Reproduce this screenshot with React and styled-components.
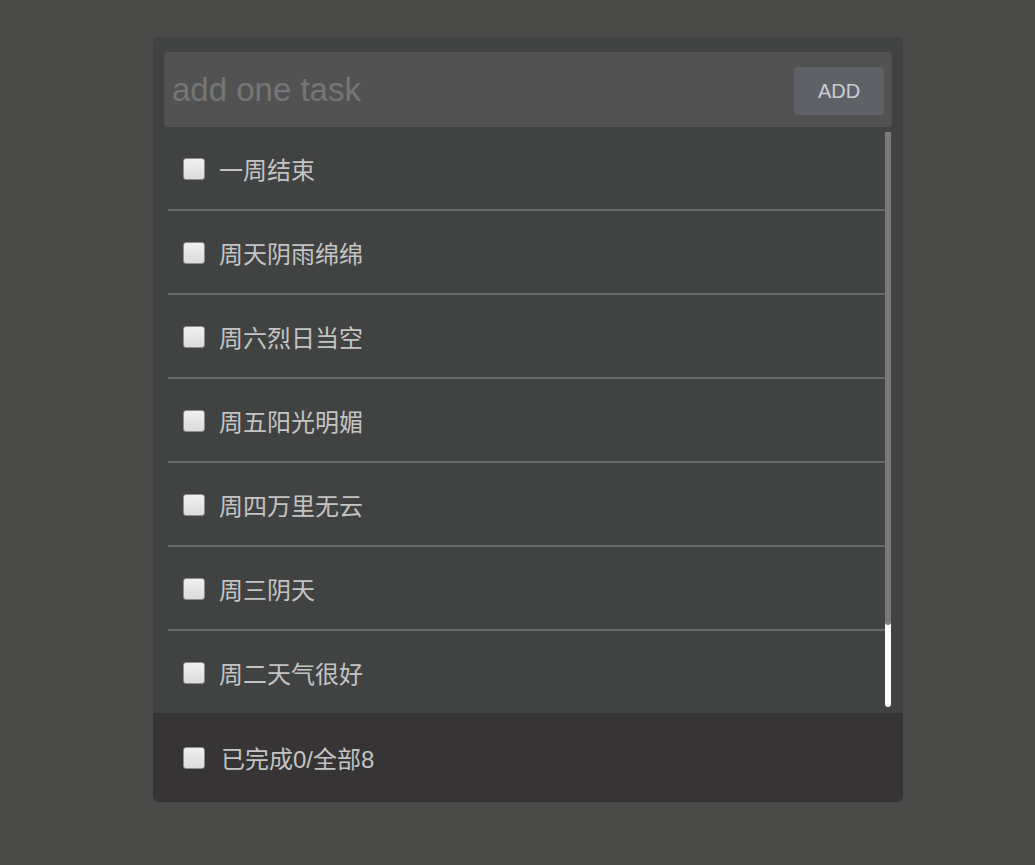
import { useState, useRef, useEffect } from "react";
import styled, { createGlobalStyle } from "styled-components";

const GlobalStyle = createGlobalStyle`
  html, body {
    margin: 0;
    padding: 0;
    background: #4a4a48;
    font-family: "Liberation Sans", "Noto Sans CJK SC", sans-serif;
  }
`;

const Page = styled.div`
  padding: 37px 0 0 153px;
  min-height: 865px;
  box-sizing: border-box;
`;

const Card = styled.div`
  width: 750px;
  background: #414242;
  border-radius: 6px;
  padding-top: 15px;
  display: flex;
  flex-direction: column;
  overflow: hidden;
`;

const InputBar = styled.div`
  margin: 0 11px;
  height: 75px;
  background: #525252;
  border-radius: 4px;
  display: flex;
  align-items: center;
  padding: 0 8px;
  gap: 10px;
`;

const TaskInput = styled.input`
  flex: 1;
  min-width: 0;
  background: transparent;
  border: none;
  outline: none;
  font-family: inherit;
  font-size: 33px;
  color: #ddd;
  padding: 0;

  &::placeholder {
    color: #767676;
  }
`;

const AddButton = styled.button`
  width: 90px;
  height: 48px;
  margin-top: 3px;
  border: none;
  border-radius: 4px;
  background: #5e6166;
  color: #c9ced5;
  font-family: inherit;
  font-size: 20px;
  cursor: pointer;
`;

const ListWrap = styled.div`
  position: relative;
  margin: 0 11px 0 15px;
`;

const List = styled.div`
  height: 586px;
  overflow-y: auto;
  padding-right: 7px;
  scrollbar-width: none;

  &::-webkit-scrollbar {
    display: none;
  }
`;

const Track = styled.div`
  position: absolute;
  right: 1px;
  top: 5px;
  bottom: 6px;
  width: 6px;
  background: #fafafa;
  border-radius: 3px;
`;

const Thumb = styled.div`
  position: absolute;
  left: 0;
  right: 0;
  background: #7b7878;
  border-radius: 3px;
`;

const Item = styled.label`
  display: flex;
  align-items: center;
  gap: 14px;
  height: 82px;
  padding-left: 15px;
  border-bottom: 2px solid #67686b;
  color: #c4c4c4;
  font-size: 24px;
  cursor: pointer;
`;

const Box = styled.input.attrs({ type: "checkbox" })`
  appearance: none;
  margin: 1px 0 0;
  width: 22px;
  height: 22px;
  box-sizing: border-box;
  border: 1px solid #8e8e8e;
  border-radius: 3px;
  background: linear-gradient(#f0f0f0, #dcdcdc);
  flex-shrink: 0;
  cursor: pointer;

  &:checked {
    background: #3b8fe0;
    border-color: #2a6fb5;
  }
`;

const Footer = styled.div`
  height: 89px;
  background: #363434;
  display: flex;
  align-items: center;
  gap: 16px;
  padding-left: 30px;
  color: #c4c4c4;
  font-size: 24px;
`;

const Label = styled.span`
  white-space: nowrap;
`;

const initialTasks = [
  "一周结束",
  "周天阴雨绵绵",
  "周六烈日当空",
  "周五阳光明媚",
  "周四万里无云",
  "周三阴天",
  "周二天气很好",
  "周一晴空万里",
];

export default function App() {
  const [tasks, setTasks] = useState(
    initialTasks.map((name, i) => ({ id: i, name, done: false }))
  );
  const [text, setText] = useState("");
  const [bar, setBar] = useState({ top: 0, size: 1 });
  const listRef = useRef(null);

  // custom scrollbar, the native one is hidden
  const measure = () => {
    const el = listRef.current;
    if (!el) return;
    const size = Math.min(1, el.clientHeight / el.scrollHeight);
    const max = el.scrollHeight - el.clientHeight;
    const top = max > 0 ? (el.scrollTop / max) * (1 - size) : 0;
    setBar({ top, size });
  };

  useEffect(measure, [tasks]);

  const done = tasks.filter((t) => t.done).length;

  const toggle = (id) =>
    setTasks(tasks.map((t) => (t.id === id ? { ...t, done: !t.done } : t)));

  const toggleAll = () => {
    const all = done !== tasks.length;
    setTasks(tasks.map((t) => ({ ...t, done: all })));
  };

  const add = () => {
    if (!text.trim()) return;
    setTasks([{ id: Date.now(), name: text.trim(), done: false }, ...tasks]);
    setText("");
  };

  return (
    <Page>
      <GlobalStyle />
      <Card>
        <InputBar>
          <TaskInput
            placeholder="add one task"
            value={text}
            onChange={(e) => setText(e.target.value)}
            onKeyDown={(e) => e.key === "Enter" && add()}
          />
          <AddButton onClick={add}>ADD</AddButton>
        </InputBar>
        <ListWrap>
          <List ref={listRef} onScroll={measure}>
            {tasks.map((task) => (
              <Item key={task.id}>
                <Box checked={task.done} onChange={() => toggle(task.id)} />
                <Label>{task.name}</Label>
              </Item>
            ))}
          </List>
          {bar.size < 1 && (
            <Track>
              <Thumb
                style={{
                  top: `${bar.top * 100}%`,
                  height: `${bar.size * 100 - 1.5}%`,
                }}
              />
            </Track>
          )}
        </ListWrap>
        <Footer>
          <Box
            checked={tasks.length > 0 && done === tasks.length}
            onChange={toggleAll}
          />
          <Label>{`已完成${done}/全部${tasks.length}`}</Label>
        </Footer>
      </Card>
    </Page>
  );
}
